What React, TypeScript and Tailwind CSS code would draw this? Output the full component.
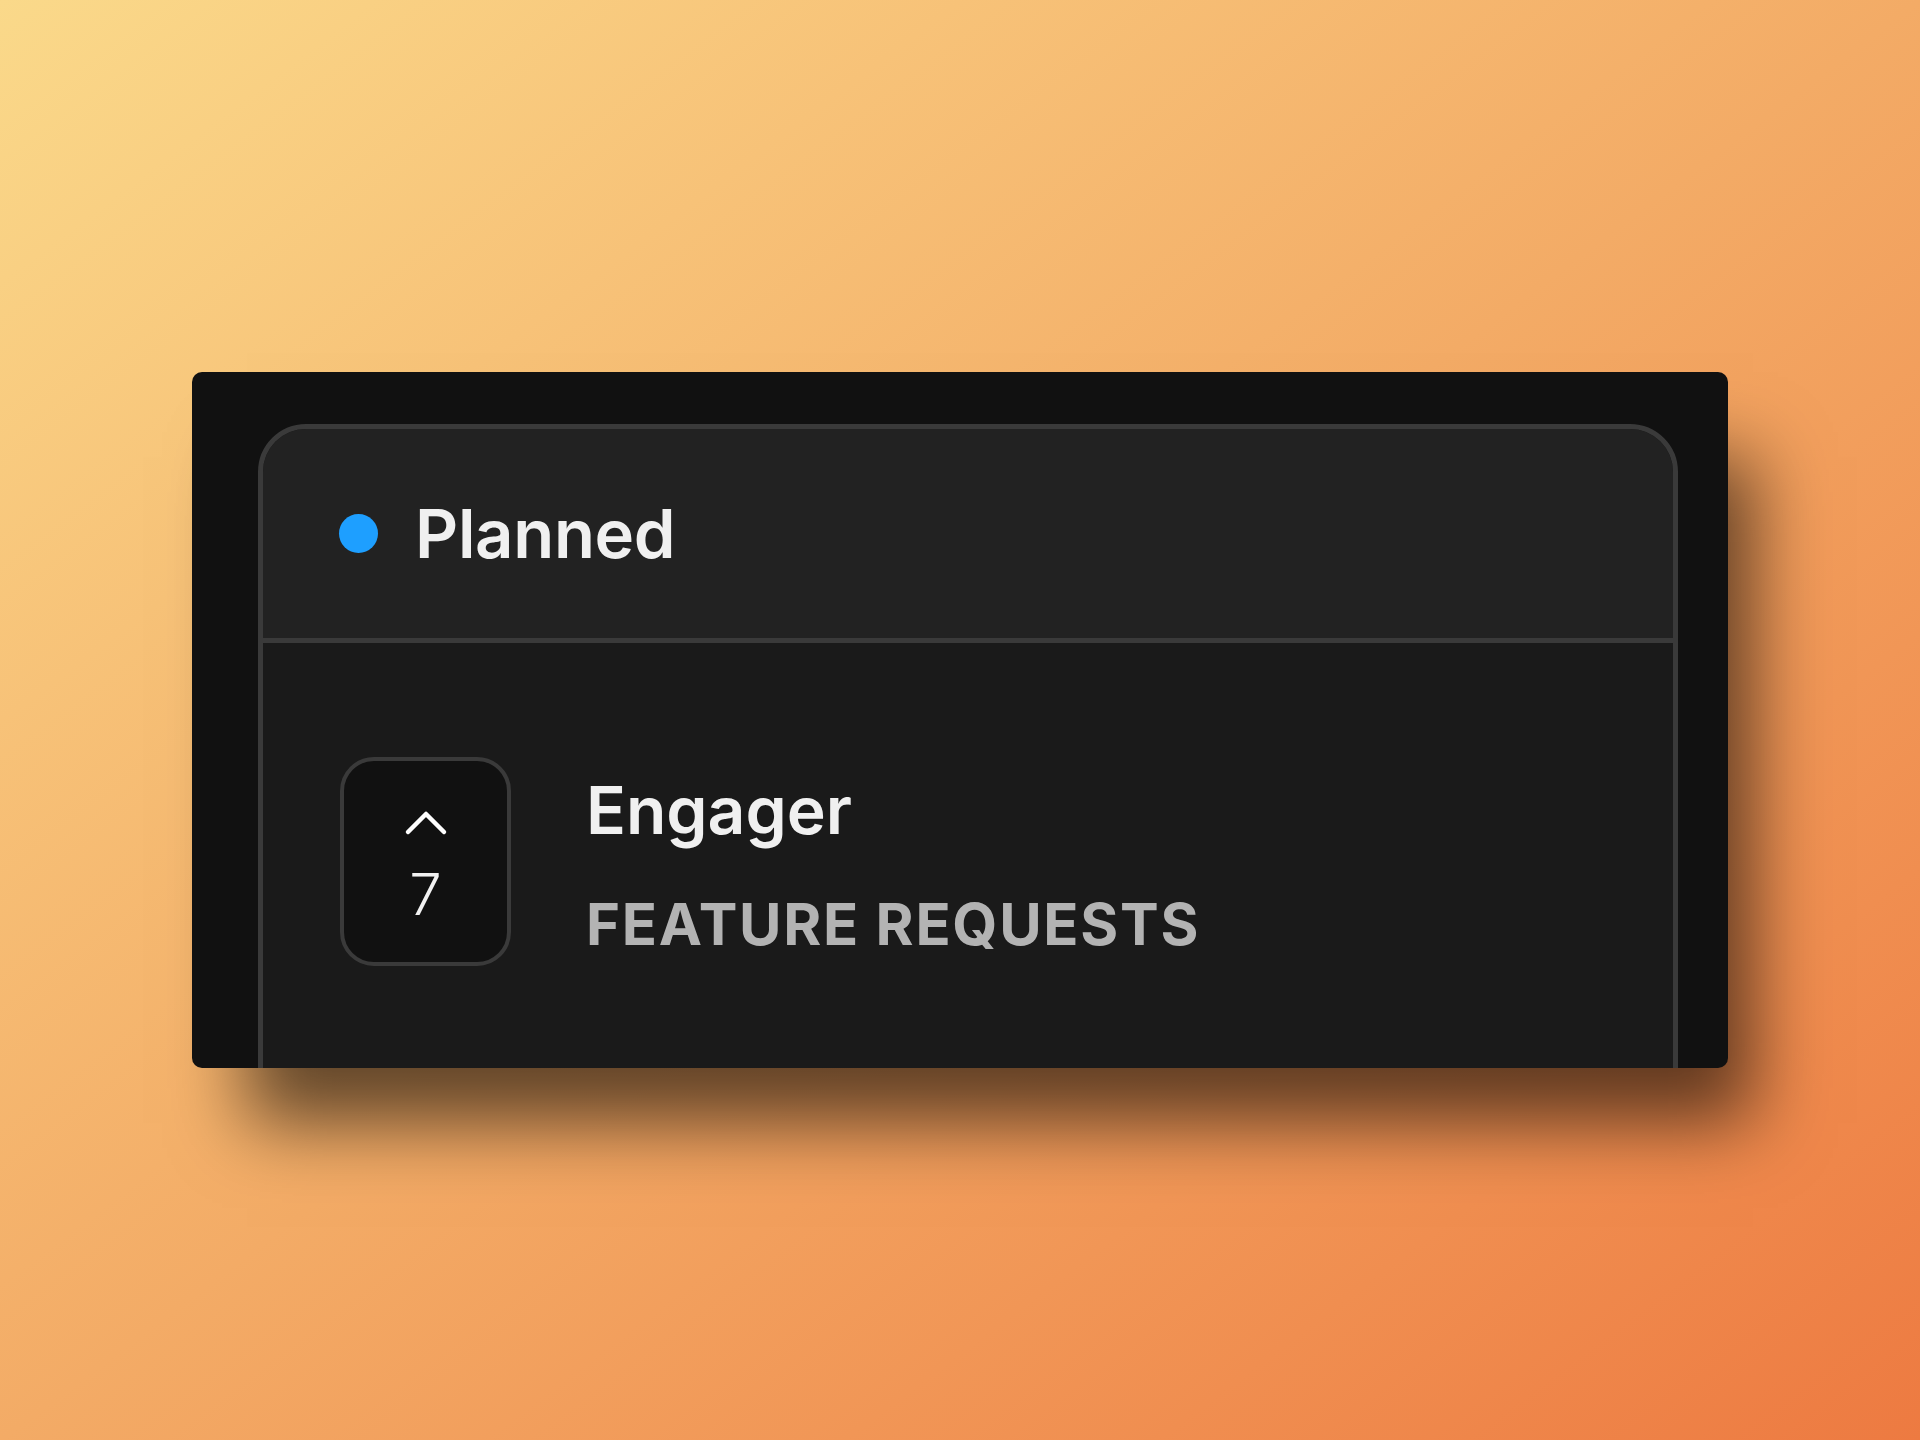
import React from "react";

export default function App() {
  return (
    <div
      className="w-full h-[1440px] bg-gradient-to-br from-[#fad98a] via-[#f3ab66] to-[#ed7a41] pl-[192px] pt-[372px]"
      style={{ fontFamily: "Inter, 'Noto Sans', sans-serif" }}
    >
      <div className="w-[1536px] h-[696px] bg-[#111111] rounded-[10px] overflow-hidden pl-[66px] pr-[50px] pt-[52px] shadow-[40px_70px_70px_-15px_rgba(0,0,0,0.6)]">
        <div className="h-[900px] rounded-t-[48px] border-[5px] border-[#3a3a3a] bg-[#1a1a1a] flex flex-col overflow-hidden">
          <div className="h-[209px] shrink-0 bg-[#222222] border-b-[5px] border-[#3a3a3a] box-content flex items-center pl-[76px]">
            <div className="w-[39px] h-[39px] rounded-full bg-[#1e9fff]" />
            <div className="ml-[37px] text-[67px] leading-none font-semibold text-[#f0f0f0] tracking-[-0.005em]">
              Planned
            </div>
          </div>
          <div className="pl-[77px] pt-[114px] flex items-center gap-[75px]">
            <div className="w-[171px] h-[209px] shrink-0 rounded-[34px] border-[4px] border-[#3a3a3a] bg-[#111111] flex flex-col items-center pt-[49px]">
              <svg width="44" height="26" viewBox="0 0 44 26" fill="none">
                <path
                  d="M4 22 L22 4 L40 22"
                  stroke="#ffffff"
                  strokeWidth="4.5"
                  strokeLinecap="round"
                  strokeLinejoin="round"
                />
              </svg>
              <div className="mt-[29px] text-[58px] leading-none font-light text-[#f2f2f2]">
                7
              </div>
            </div>
            <div className="flex flex-col mt-[6px]">
              <div className="text-[66px] leading-none font-semibold text-[#f0f0f0]">
                Engager
              </div>
              <div className="mt-[52px] text-[58px] leading-none font-bold text-[#b3b3b3] tracking-[0.03em]">
                FEATURE REQUESTS
              </div>
            </div>
          </div>
        </div>
      </div>
    </div>
  );
}
